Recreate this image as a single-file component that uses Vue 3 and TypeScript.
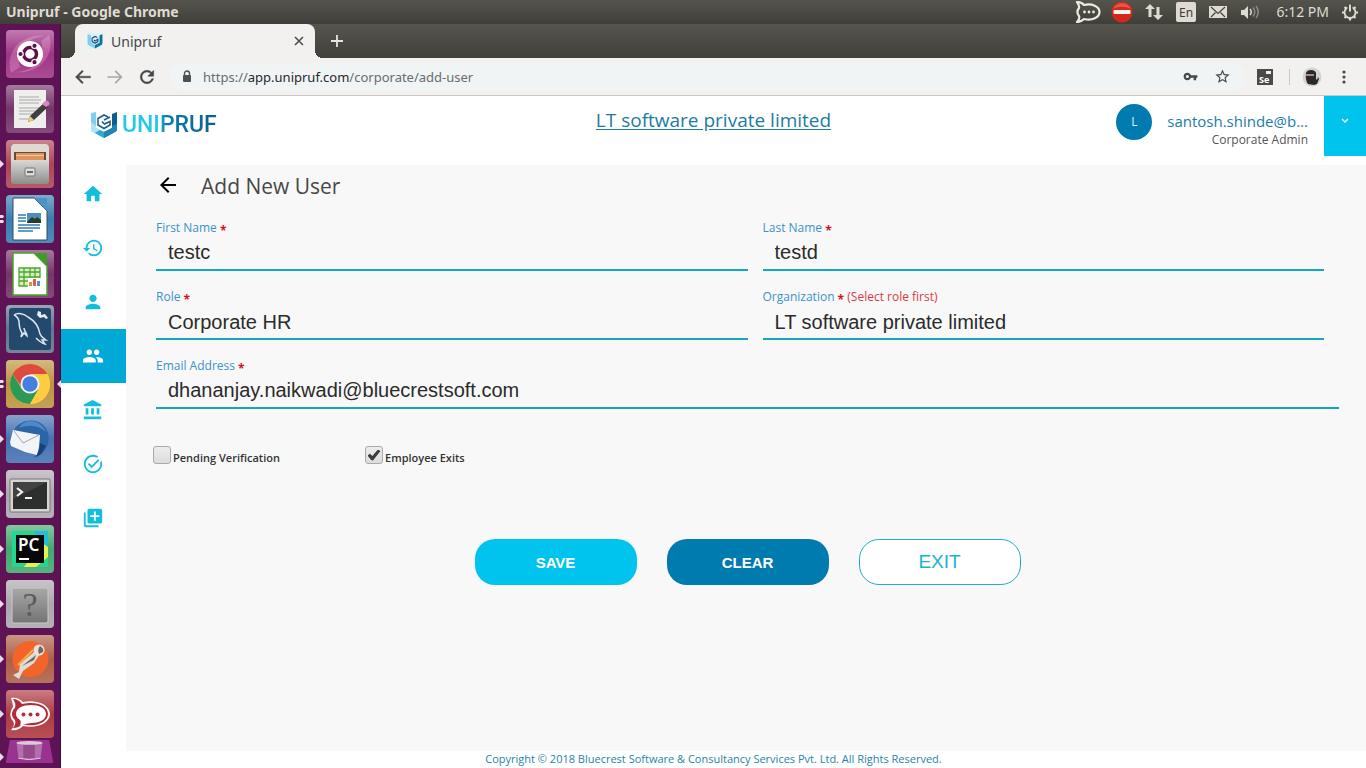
<script setup lang="ts">
import { ref } from 'vue'

interface NavItem {
  label: string
  path: string
  active?: boolean
}

interface Person {
  firstName: string
  lastName: string
  role: string
  organization: string
  email: string
}

const form = ref<Person>({
  firstName: 'testc',
  lastName: 'testd',
  role: 'Corporate HR',
  organization: 'LT software private limited',
  email: 'dhananjay.naikwadi@bluecrestsoft.com',
})
const pending = ref(false)
const exits = ref(true)

function clearForm(): void {
  form.value = { firstName: '', lastName: '', role: '', organization: '', email: '' }
  pending.value = false
  exits.value = false
}

const nav: NavItem[] = [
  { label: 'Home', path: 'M10 20v-6h4v6h5v-8h3L12 3 2 12h3v8z' },
  {
    label: 'History',
    path: 'M13 3c-4.97 0-9 4.03-9 9H1l3.89 3.89.07.14L9 12H6c0-3.87 3.13-7 7-7s7 3.13 7 7-3.13 7-7 7c-1.93 0-3.68-.79-4.94-2.06l-1.42 1.42C8.27 19.99 10.51 21 13 21c4.97 0 9-4.03 9-9s-4.03-9-9-9zm-1 5v5l4.28 2.54.72-1.21-3.5-2.08V8H12z',
  },
  {
    label: 'Profile',
    path: 'M12 12c2.21 0 4-1.79 4-4s-1.79-4-4-4-4 1.79-4 4 1.79 4 4 4zm0 2c-2.67 0-8 1.34-8 4v2h16v-2c0-2.66-5.33-4-8-4z',
  },
  {
    label: 'Users',
    active: true,
    path: 'M16 11c1.66 0 2.99-1.34 2.99-3S17.66 5 16 5c-1.66 0-3 1.34-3 3s1.34 3 3 3zm-8 0c1.66 0 2.99-1.34 2.99-3S9.66 5 8 5C6.34 5 5 6.34 5 8s1.34 3 3 3zm0 2c-2.33 0-7 1.17-7 3.5V19h14v-2.5c0-2.33-4.67-3.5-7-3.5zm8 0c-.29 0-.62.02-.97.05 1.16.84 1.97 1.97 1.97 3.45V19h6v-2.5c0-2.33-4.67-3.5-7-3.5z',
  },
  {
    label: 'Organizations',
    path: 'M4 10v7h3v-7H4zm6 0v7h3v-7h-3zM2 22h19v-3H2v3zm14-12v7h3v-7h-3zm-4.5-9L2 6v2h19V6l-9.5-5z',
  },
  {
    label: 'Verification',
    path: 'M10.6 16.6l-4.24-4.24 1.41-1.41 2.83 2.83 6.9-6.9 1.41 1.41zM19.79 10.22c.13.57.21 1.17.21 1.78 0 4.42-3.58 8-8 8s-8-3.58-8-8 3.58-8 8-8c1.58 0 3.04.46 4.28 1.25l1.44-1.44C16.1 2.67 14.13 2 12 2 6.48 2 2 6.48 2 12s4.48 10 10 10 10-4.48 10-10c0-1.19-.22-2.33-.6-3.39z',
  },
  {
    label: 'Add request',
    path: 'M4 6H2v14c0 1.1.9 2 2 2h14v-2H4V6zm16-4H8c-1.1 0-2 .9-2 2v12c0 1.1.9 2 2 2h12c1.1 0 2-.9 2-2V4c0-1.1-.9-2-2-2zm-1 9h-4v4h-2v-4H9V9h4V5h2v4h4v2z',
  },
]
</script>

<template>
  <div class="desktop">
    <header class="panel">
      <span class="panel-title">Unipruf - Google Chrome</span>
      <div class="indicators">
        <svg width="26" height="22" viewBox="0 0 26 22">
          <path d="M2 1c3 0 5.500 1 7 3 8-2 15.500 1.500 15.500 7S17 20 9 18c-2 2-4 3-7 3 2-2 2.800-4 2-6-2-2.500-2-5.500 0-8 .5-2-.5-4-2-6z" fill="none" stroke="#eeeae2" stroke-width="2.200" stroke-linejoin="round" />
          <g fill="#eeeae2"><circle cx="9.500" cy="11" r="1.400" /><circle cx="14" cy="11" r="1.400" /><circle cx="18.500" cy="11" r="1.400" /></g>
        </svg>
        <svg width="22" height="22" viewBox="0 0 22 22">
          <circle cx="11" cy="11" r="10.500" fill="#d2291f" />
          <path d="M2 8a10 10 0 0 1 18 0c-5-3-13-3-18 0z" fill="#ee7b68" opacity=".6" />
          <rect x="2.500" y="9" width="17" height="4" rx="1" fill="#f6f2ee" />
        </svg>
        <svg width="22" height="22" viewBox="0 0 22 22">
          <path d="M7 3l5 5H8.500v8h-3V8H2zM15 19l-5-5h3.500V6h3v8H20z" fill="#dfdbd2" />
        </svg>
        <svg width="22" height="22" viewBox="0 0 22 22">
          <rect x="1" y="1" width="20" height="20" rx="2" fill="#dfdbd2" />
          <text x="11" y="16" text-anchor="middle" font-size="12" fill="#3c3b37">En</text>
        </svg>
        <svg width="22" height="22" viewBox="0 0 22 22">
          <rect x="2" y="5" width="18" height="12" fill="#dfdbd2" />
          <path d="M4 6l7 6.500L18 6M4 16l4.500-4.500M18 16l-4.500-4.500" fill="none" stroke="#45443e" stroke-width="1.200" />
        </svg>
        <svg width="22" height="22" viewBox="0 0 22 22">
          <path d="M2 9h3l4-4v13l-4-4H2z" fill="#dfdbd2" />
          <path d="M11 8q2.500 3 0 6" fill="none" stroke="#dfdbd2" stroke-width="1.500" />
          <path d="M14 6.500q3.500 4.500 0 9M17 5q4.500 6 0 12" fill="none" stroke="#8b8982" stroke-width="1.500" />
        </svg>
        <time>6:12 PM</time>
        <svg width="18" height="22" viewBox="0 0 18 22">
          <circle cx="9" cy="11.500" r="5.500" fill="none" stroke="#dfdbd2" stroke-width="1.800" />
          <g stroke="#dfdbd2" stroke-width="2.200">
            <path d="M1 11.500h3M14 11.500h3M9 16.500v3M3.500 6l2 2M14.500 6l-2 2M3.500 17l2-2M14.500 17l-2-2" />
          </g>
          <path d="M9 3v7" stroke="#45443e" stroke-width="5" />
          <path d="M9 3.500v7" stroke="#dfdbd2" stroke-width="2" />
        </svg>
      </div>
    </header>

    <aside class="launcher">
      <svg class="defs" width="0" height="0" aria-hidden="true">
        <defs>
          <linearGradient id="gloss" x1="0" y1="0" x2="0" y2="1">
            <stop offset="0" stop-color="#fff" stop-opacity=".38" />
            <stop offset=".5" stop-color="#fff" stop-opacity=".05" />
            <stop offset="1" stop-color="#fff" stop-opacity=".16" />
          </linearGradient>
          <linearGradient id="steel" x1="0" y1="0" x2="0" y2="1">
            <stop offset="0" stop-color="#d8d8d6" />
            <stop offset="1" stop-color="#8d8d8c" />
          </linearGradient>
          <linearGradient id="slate" x1="0" y1="0" x2="0" y2="1">
            <stop offset="0" stop-color="#a8a8a8" />
            <stop offset="1" stop-color="#747474" />
          </linearGradient>
        </defs>
      </svg>

      <button class="tile" aria-label="Search your computer">
        <svg viewBox="0 0 48 48">
          <rect width="48" height="48" rx="4" fill="#9a2a80" />
          <path d="M5 43C-2 20 18 2 42 6 22 6 9 20 14 37M43 5c7 22-12 40-36 37 20 0 34-13 28-31" fill="#d681b8" opacity=".45" />
          <rect width="48" height="48" rx="4" fill="url(#gloss)" />
          <circle cx="24" cy="24" r="13" fill="#fff" />
          <circle cx="24" cy="24" r="6.500" fill="none" stroke="#5e1049" stroke-width="3.500" />
          <g fill="#5e1049" stroke="#fff" stroke-width="1.200"><circle cx="14.500" cy="24" r="2.700" /><circle cx="28.500" cy="15.800" r="2.700" /><circle cx="28.500" cy="32.200" r="2.700" /></g>
        </svg>
      </button>
      <button class="tile" aria-label="Text Editor">
        <svg viewBox="0 0 48 48">
          <rect width="48" height="48" rx="4" fill="#6d2a63" />
          <rect width="48" height="48" rx="4" fill="url(#gloss)" />
          <path d="M8 5h32v38H8z" fill="#eeeeec" />
          <path d="M13 12h20M13 15h22M13 18h20M13 23h21M13 26h19M13 29h14M13 34h10" stroke="#a9a9a7" stroke-width="1.200" />
          <path d="M22 37l2-6 14-13 4 4-14 13z" fill="#3f3f3f" />
          <path d="M22 37l2-6 4 4z" fill="#e8cf75" />
          <path d="M36 19l3-3q3-1 4 1t0 3l-3 2z" fill="#d887c0" />
        </svg>
      </button>
      <button class="tile" aria-label="Files">
        <svg class="pip" width="5" height="8" viewBox="0 0 5 8"><path d="M0 0l4 4-4 4z" fill="#e6dde5" /></svg>
        <svg viewBox="0 0 48 48">
          <rect width="48" height="48" rx="4" fill="#a83b4d" />
          <rect width="48" height="48" rx="4" fill="url(#gloss)" />
          <path d="M8 4h32q2 0 3 3v15H5V7q1-3 3-3z" fill="#dddad4" />
          <path d="M8 12h32v8H8z" fill="#6a4a35" />
          <path d="M10 13h28v7H10z" fill="#e0935a" />
          <path d="M10 15h28v1H10z" fill="#f7c796" />
          <path d="M5 20h38v21q0 3-3 3H8q-3 0-3-3z" fill="url(#steel)" />
          <rect x="19" y="28" width="10" height="8" rx="1" fill="#ddd" stroke="#777" />
          <path d="M21 32h6" stroke="#666" stroke-width="2" />
        </svg>
      </button>
      <button class="tile" aria-label="LibreOffice Writer">
        <svg class="pip" width="5" height="8" viewBox="0 0 5 8"><path d="M0 0h3l1 1.500L3 3H0zM0 5h3l1 1.500L3 8H0z" fill="#e6dde5" /></svg>
        <svg viewBox="0 0 48 48">
          <rect width="48" height="48" rx="4" fill="#2f77ac" />
          <rect width="48" height="48" rx="4" fill="url(#gloss)" />
          <path d="M7 3h21l13 13v29H7z" fill="#fff" stroke="#2c4d66" />
          <path d="M28 3h13v13z" fill="#4c94c8" />
          <path d="M12 20h8M12 23h8M12 26h8M12 30h22M12 33h22M12 36h15" stroke="#2f7db4" stroke-width="1.500" />
          <path d="M21 18h14v10H21z" fill="#4990bf" />
          <path d="M21 27l5-5 3 2 2-2 4 3v3H21z" fill="#263c24" />
        </svg>
      </button>
      <button class="tile" aria-label="LibreOffice Calc">
        <svg viewBox="0 0 48 48">
          <rect width="48" height="48" rx="4" fill="#6d2a63" />
          <rect width="48" height="48" rx="4" fill="url(#gloss)" />
          <path d="M7 3h21l13 13v29H7z" fill="#fff" stroke="#48a52b" stroke-width="1.500" />
          <path d="M28 3h13v13z" fill="#3e9d25" />
          <path d="M13 18h21v18H13z" fill="#d9efc4" />
          <path d="M13 18h21v18H13zM13 22h21M13 27h21M13 31h21M18 18v18M24 18v18M29 18v18" fill="none" stroke="#4ca82d" stroke-width="1.300" />
          <path d="M22 28h14v9H22z" fill="#fff" />
          <path d="M23 32h3v4h-3z" fill="#e78b47" /><path d="M27 29h3v7h-3z" fill="#d9644c" /><path d="M31 31h3v5h-3z" fill="#5b91c8" />
        </svg>
      </button>
      <button class="tile" aria-label="MySQL Workbench">
        <svg viewBox="0 0 48 48">
          <rect width="48" height="48" rx="4" fill="#5d6d8a" />
          <rect width="48" height="48" rx="4" fill="url(#gloss)" />
          <rect x="3" y="3" width="42" height="42" rx="3" fill="#23496d" />
          <path d="M8 10c4-3 10-1 14 2 7 4 11 11 12 17 1 3 3 4 6 6l-4 0 3 4c-4-1-7-4-9-6M8 10c3 1 4 3 5 6 0 5 1 9 3 12l-1 4 3-4 3 3c0-3-3-5-3-8" fill="none" stroke="#d9e5ee" stroke-width="1.500" />
          <path d="M32 6l3 1 0 3 4-1 3 4-2 1-2-2-4 1-3-3z" fill="#e9eef2" />
        </svg>
      </button>
      <button class="tile" aria-label="Google Chrome">
        <svg class="pip" width="5" height="8" viewBox="0 0 5 8"><path d="M0 0h3l1 1.500L3 3H0zM0 5h3l1 1.500L3 8H0z" fill="#e6dde5" /></svg>
        <svg class="pip-right" width="5" height="8" viewBox="0 0 5 8"><path d="M5 0L1 4l4 4z" fill="#e6dde5" /></svg>
        <svg viewBox="0 0 48 48">
          <rect width="48" height="48" rx="4" fill="#b88f35" />
          <rect width="48" height="48" rx="4" fill="url(#gloss)" />
          <circle cx="24" cy="24" r="20" fill="#ffcd45" />
          <path d="M6.700 14A20 20 0 0 1 41.300 14L24 15l-8.500 12z" fill="#dd4b3e" />
          <path d="M6.700 14A20 20 0 0 0 24 44l8.500-15L24 33l-8-4z" fill="#2c9a56" />
          <path d="M24 14h17.300A20 20 0 0 1 24 44l9-15z" fill="#fccc42" />
          <circle cx="24" cy="24" r="9.500" fill="#f5f5f5" /><circle cx="24" cy="24" r="7.700" fill="#467fe0" />
        </svg>
      </button>
      <button class="tile" aria-label="Thunderbird Mail">
        <svg class="pip" width="5" height="8" viewBox="0 0 5 8"><path d="M0 0l4 4-4 4z" fill="#e6dde5" /></svg>
        <svg viewBox="0 0 48 48">
          <rect width="48" height="48" rx="4" fill="#3b6cae" />
          <rect width="48" height="48" rx="4" fill="url(#gloss)" />
          <path d="M8 15C16 2 37 2 42 18c3 11-4 23-15 25 8-7 8-13 4-20z" fill="#2c64a8" />
          <path d="M13 13C20 1 36 6 40 17c-8-7-17-8-27-4z" fill="#4a8bc9" />
          <path d="M4 27l3-12 27 5-1 12-2 8-12-3-14-6z" fill="#f3f4f6" />
          <path d="M8 16l9 12 16-8" fill="none" stroke="#9da8b5" />
          <path d="M34 28l6 3-5 8-5 3 3-7z" fill="#193f7d" />
        </svg>
      </button>
      <button class="tile" aria-label="Terminal">
        <svg class="pip" width="5" height="8" viewBox="0 0 5 8"><path d="M0 0l4 4-4 4z" fill="#e6dde5" /></svg>
        <svg viewBox="0 0 48 48">
          <rect width="48" height="48" rx="4" fill="#aaa2ad" />
          <rect width="48" height="48" rx="4" fill="url(#gloss)" />
          <rect x="4" y="9" width="40" height="33" rx="1" fill="#d5d5d2" stroke="#777" />
          <path d="M7 12h34v27H7z" fill="#2d2f2e" /><path d="M7 12h34L7 29z" fill="#4e504f" opacity=".6" />
          <path d="M11 18l5 4-5 4M19 28h7" fill="none" stroke="#f2f2f2" stroke-width="2.200" />
        </svg>
      </button>
      <button class="tile" aria-label="PyCharm">
        <svg class="pip" width="5" height="8" viewBox="0 0 5 8"><path d="M0 0l4 4-4 4z" fill="#e6dde5" /></svg>
        <svg viewBox="0 0 48 48">
          <rect width="48" height="48" rx="4" fill="#39a468" />
          <rect width="48" height="48" rx="4" fill="url(#gloss)" />
          <path d="M6 6h36v36H6z" fill="#22d88f" /><path d="M28 6h14v20l-8-6z" fill="#20bfd8" /><path d="M42 22v10L30 42H18l18-24z" fill="#e9ef4f" />
          <path d="M10 10h28v28H10z" fill="#080808" /><path d="M13 34h10" stroke="#fff" stroke-width="2" />
          <text x="12" y="26" font-size="17" font-weight="600" fill="#fff">PC</text>
        </svg>
      </button>
      <button class="tile" aria-label="Unknown application">
        <svg class="pip" width="5" height="8" viewBox="0 0 5 8"><path d="M0 0l4 4-4 4z" fill="#e6dde5" /></svg>
        <svg viewBox="0 0 48 48">
          <rect width="48" height="48" rx="4" fill="#a7a2aa" />
          <rect width="48" height="48" rx="4" fill="url(#gloss)" />
          <rect x="6" y="8" width="36" height="35" rx="2" fill="url(#slate)" stroke="#c9c9c9" />
          <text class="serif" x="24" y="36" text-anchor="middle" font-size="34" fill="#5c5c5c">?</text>
        </svg>
      </button>
      <button class="tile" aria-label="Postman">
        <svg class="pip" width="5" height="8" viewBox="0 0 5 8"><path d="M0 0l4 4-4 4z" fill="#e6dde5" /></svg>
        <svg viewBox="0 0 48 48">
          <rect width="48" height="48" rx="4" fill="#a9573e" />
          <rect width="48" height="48" rx="4" fill="url(#gloss)" />
          <circle cx="24.500" cy="24" r="18" fill="#f3642b" />
          <path d="M28 17L14 29l-1 8-6 3 6 4 4-8 11-8 6-9z" fill="#dddcd6" />
          <path d="M30 20L16 31l12-6z" fill="#6b6862" />
          <path d="M27 15L12 30" stroke="#f3b23c" stroke-width="2" />
          <circle cx="33" cy="15" r="5.500" fill="#e5e4df" /><path d="M34 11q4 2 3 6l-4 2q-2-4 1-8z" fill="#6b6862" />
        </svg>
      </button>
      <button class="tile" aria-label="Rocket.Chat">
        <svg class="pip" width="5" height="8" viewBox="0 0 5 8"><path d="M0 0l4 4-4 4z" fill="#e6dde5" /></svg>
        <svg viewBox="0 0 48 48">
          <rect width="48" height="48" rx="4" fill="#aa2e38" />
          <rect width="48" height="48" rx="4" fill="url(#gloss)" />
          <path d="M5 8c5-1 9 1 12 4 14-3 27 3 27 12s-13 15-27 12c-3 3-7 5-12 4 4-4 3-7 2-9-4-4-3-10 0-14 0-3-1-6-2-9z" fill="#fff" />
          <path d="M7 9c4 0 7 2 9 5 15-3 26 2 26 10s-12 14-26 10c-3 3-5 4-9 4 2-3 3-5 2-8-4-3-4-9 0-12 1-3 0-6-2-9z" fill="#b52b36" />
          <path d="M10 24c0-6 7-9 15-9s15 3 15 9-7 9-15 9l-11 2c1-2 1-3 0-5-3-2-4-4-4-6z" fill="#fff" />
          <g fill="#b52b36"><circle cx="17.500" cy="24.500" r="2" /><circle cx="24.500" cy="24.500" r="2" /><circle cx="31.500" cy="24.500" r="2" /></g>
        </svg>
      </button>
      <button class="tile folded" aria-label="Trash">
        <svg class="pip" width="5" height="8" viewBox="0 0 5 8"><path d="M0 0l4 4-4 4z" fill="#e6dde5" /></svg>
        <svg viewBox="0 0 50 24">
          <path d="M4 0h41l4 22q1 2-1 2H1q-2 0-1-2z" fill="#9a3290" />
          <path d="M11 3h27l-2 16q-11 3-23 0z" fill="#b680b0" opacity=".8" />
          <path d="M18 4h12v15H18z" fill="#853079" opacity=".6" />
          <ellipse cx="24.500" cy="3" rx="13.500" ry="2" fill="#dcc9da" />
          <path d="M13 19q11 3 23 0" fill="none" stroke="#e0cddd" />
        </svg>
      </button>
    </aside>

    <div class="browser">
      <div class="tabs">
        <div class="tab">
          <svg width="16" height="16" viewBox="0 0 28 28">
            <rect width="28" height="28" fill="#dff1f8" />
            <path d="M1 2l6 2v13l7 4v6L3 21q-2-1-2-4z" fill="#7fcfec" />
            <path d="M27 2l-5 2v13l-8 4v6l11-6q2-1 2-4z" fill="#0e6f9e" />
            <path d="M18 8l-4-2-5 3v6l5 3 5-3v-4l-5 3-2-2" fill="none" stroke="#17527c" stroke-width="2" />
          </svg>
          <span class="tab-name">Unipruf</span>
          <button class="plain" aria-label="Close tab">
            <svg width="10" height="10" viewBox="0 0 10 10"><path d="M1 1l8 8M9 1L1 9" stroke="#4a4d50" stroke-width="1.600" /></svg>
          </button>
        </div>
        <button class="plain new-tab" aria-label="New tab">
          <svg width="12" height="12" viewBox="0 0 12 12"><path d="M6 0v12M0 6h12" stroke="#e7e6e2" stroke-width="1.800" /></svg>
        </button>
      </div>

      <div class="toolbar">
        <div class="nav-buttons">
          <button class="plain" aria-label="Back"><svg width="20" height="20" viewBox="0 0 24 24"><path d="M21 11H6.800l5.600-5.600L11 4l-8 8 8 8 1.400-1.400L6.800 13H21z" fill="#45484b" stroke="#45484b" stroke-width=".5" /></svg></button>
          <button class="plain" aria-label="Forward"><svg width="20" height="20" viewBox="0 0 24 24"><path d="M3 11h14.200l-5.600-5.600L13 4l8 8-8 8-1.400-1.400 5.600-5.600H3z" fill="#a6a7a7" /></svg></button>
          <button class="plain" aria-label="Reload"><svg width="20" height="20" viewBox="0 0 24 24"><path d="M17.650 6.350C16.200 4.900 14.210 4 12 4c-4.420 0-7.990 3.580-7.990 8s3.570 8 7.990 8c3.730 0 6.840-2.550 7.730-6h-2.080c-.82 2.330-3.040 4-5.650 4-3.310 0-6-2.690-6-6s2.690-6 6-6c1.660 0 3.140.69 4.220 1.780L13 11h7V4l-2.350 2.350z" fill="#45484b" stroke="#45484b" stroke-width=".6" /></svg></button>
        </div>
        <div class="omnibox">
          <svg width="10" height="13" viewBox="0 0 10 13"><path d="M2.500 6V3.500a2.500 2.500 0 0 1 5 0V6" fill="none" stroke="#4d5154" stroke-width="1.400" /><rect x="1" y="5" width="8" height="7" rx="1" fill="#4d5154" /></svg>
          <div class="url" role="textbox" aria-label="Address"><span>https://</span><span class="host">app.unipruf.com</span><span>/corporate/add-user</span></div>
          <button class="plain" aria-label="Saved passwords"><svg width="15" height="15" viewBox="0 0 24 24"><path d="M12.650 10C11.830 7.670 9.610 6 7 6c-3.310 0-6 2.690-6 6s2.690 6 6 6c2.610 0 4.830-1.670 5.650-4H17v4h4v-4h2v-4H12.650zM7 14.500a2.500 2.500 0 1 1 0-5 2.500 2.500 0 0 1 0 5z" fill="#45484b" /></svg></button>
          <button class="plain" aria-label="Bookmark this page"><svg width="17" height="17" viewBox="0 0 24 24"><path d="M22 9.240l-7.190-.62L12 2 9.190 8.630 2 9.240l5.460 4.730L5.820 21 12 17.270 18.180 21l-1.630-7.030L22 9.240zM12 15.400l-3.760 2.270 1-4.280-3.320-2.880 4.380-.38L12 6.100l1.710 4.040 4.380.38-3.320 2.880 1 4.280L12 15.400z" fill="#45484b" /></svg></button>
        </div>
        <button class="plain" aria-label="Selenium IDE">
          <svg width="16" height="16" viewBox="0 0 16 16"><rect width="16" height="16" fill="#4a4a4a" /><rect x="9" y="2" width="5" height="3" fill="#eee" /><text x="2" y="14" font-size="9" font-weight="700" fill="#fff">Se</text></svg>
        </button>
        <i class="divider"></i>
        <button class="plain" aria-label="Profile">
          <svg width="20" height="20" viewBox="0 0 20 20"><circle cx="10" cy="10" r="9.500" fill="#d3d3d2" /><path d="M4 6q1-3 5-3t5 3v6l1 1 1-3 1 2-2 5-3 1-6-1q-3-4-2-11z" fill="#2b2829" /><path d="M4 7h8v2H4z" fill="#ad8a80" /></svg>
        </button>
        <button class="plain menu" aria-label="Menu">
          <svg width="4" height="14" viewBox="0 0 4 14"><g fill="#45484b"><circle cx="2" cy="2" r="1.600" /><circle cx="2" cy="7" r="1.600" /><circle cx="2" cy="12" r="1.600" /></g></svg>
        </button>
      </div>

      <div class="app">
        <header class="app-header">
          <a class="logo" href="#" aria-label="Unipruf">
            <svg width="28" height="26" viewBox="0 0 28 26">
              <path d="M1 1l5-1v16l8 4v6L3 20q-2-1-2-4z" fill="#7fd0ef" />
              <path d="M1 10l5 4v2l8 4v6L3 20q-2-1-2-4z" fill="#aee2f4" />
              <path d="M14 20l-4-2-5 3 9 5z" fill="#2fa8d4" />
              <path d="M27 0l-5 2v14l-8 4v6l11-6q2-1 2-4z" fill="#0d5c8d" />
              <path d="M22 14l5-2v4q0 3-2 4l-11 6v-6l8-4z" fill="#1f86b4" />
              <path d="M18 5l-4-2-6 3.500v6.500l6 3.500 6-3.500V9.500L14.500 12 12 9.500M14 8l6-3" fill="none" stroke="#1c5f88" stroke-width="1.600" />
            </svg>
            <span class="wordmark">UNIPRUF</span>
          </a>
          <a class="company" href="#">LT software private limited</a>
          <div class="account">
            <span class="avatar">L</span>
            <div class="who">
              <span class="mail">santosh.shinde@b...</span>
              <span class="role">Corporate Admin</span>
            </div>
            <button class="expand" aria-label="Account menu">
              <svg width="8" height="6" viewBox="0 0 8 6"><path d="M1 1l3 3 3-3" fill="none" stroke="#fff" stroke-width="1.300" /></svg>
            </button>
          </div>
        </header>

        <nav class="side">
          <a v-for="item in nav" :key="item.label" href="#" :class="{ active: item.active }" :aria-label="item.label">
            <svg width="24" height="24" viewBox="0 0 24 24"><path :d="item.path" fill="currentColor" /></svg>
          </a>
        </nav>

        <main class="content">
          <div class="heading">
            <button class="plain" aria-label="Go back"><svg width="24" height="24" viewBox="0 0 24 24"><path d="M20 11H7.830l5.590-5.590L12 4l-8 8 8 8 1.410-1.410L7.830 13H20v-2z" fill="#000" /></svg></button>
            <h1>Add New User</h1>
          </div>

          <form @submit.prevent>
            <div class="fields">
              <div class="field">
                <label for="first">First Name <b>*</b></label>
                <input id="first" v-model="form.firstName" type="text" />
              </div>
              <div class="field inset">
                <label for="last">Last Name <b>*</b></label>
                <input id="last" v-model="form.lastName" type="text" />
              </div>
              <div class="field">
                <label for="role">Role <b>*</b></label>
                <select id="role" v-model="form.role"><option>Corporate HR</option></select>
              </div>
              <div class="field inset">
                <label for="org">Organization <b>*</b> <em>(Select role first)</em></label>
                <select id="org" v-model="form.organization"><option>LT software private limited</option></select>
              </div>
              <div class="field wide">
                <label for="email">Email Address <b>*</b></label>
                <input id="email" v-model="form.email" type="email" />
              </div>
            </div>

            <div class="checks">
              <label><input v-model="pending" type="checkbox" /><span>Pending Verification</span></label>
              <label><input v-model="exits" type="checkbox" /><span>Employee Exits</span></label>
            </div>

            <div class="actions">
              <button class="save" type="submit">SAVE</button>
              <button class="clear" type="button" @click="clearForm">CLEAR</button>
              <button class="exit" type="button">EXIT</button>
            </div>
          </form>
        </main>

        <footer>Copyright © 2018 Bluecrest Software &amp; Consultancy Services Pvt. Ltd. All Rights Reserved.</footer>
      </div>
    </div>
  </div>
</template>

<style>
body {
  margin: 0;
}
</style>

<style scoped>
* {
  box-sizing: border-box;
}

.desktop {
  display: grid;
  grid-template: 24px minmax(0, 1fr) / 61px minmax(0, 1fr);
  height: 100vh;
  overflow: hidden;
  font-family: "Noto Sans", "Open Sans", sans-serif;
}

svg {
  display: block;
  flex: none;
}

button,
input,
select {
  font: inherit;
  margin: 0;
}

.plain {
  display: flex;
  padding: 0;
  border: 0;
  background: none;
}

/* Desktop panel */
.panel {
  grid-column: 1 / -1;
  display: flex;
  align-items: center;
  justify-content: space-between;
  padding: 0 7px 0 6px;
  background: linear-gradient(#55544c, #3f3e39);
  color: #dfdbd2;
  line-height: 20px;
}

.panel-title {
  font-size: 14px;
  font-weight: 700;
}

.indicators {
  display: flex;
  align-items: center;
  gap: 10px;
}

.indicators time {
  padding: 0 2px 0 5px;
  font-size: 14px;
}

/* Launcher */
.launcher {
  display: flex;
  flex-direction: column;
  gap: 7px;
  padding: 6px 7px 4px 6px;
  background: #5e1355;
  border-right: 1px solid #35103a;
}

.defs {
  position: absolute;
}

.tile {
  position: relative;
  flex: none;
  width: 48px;
  height: 48px;
  padding: 0;
  border: 0;
  background: none;
}

.tile.folded {
  height: 24px;
  margin-top: -5px;
}

.pip,
.pip-right {
  position: absolute;
  top: 20px;
  left: -6px;
}

.folded .pip {
  top: 13px;
}

.pip-right {
  left: 50px;
}

.serif {
  font-family: "Liberation Serif", serif;
}

/* Browser chrome */
.browser {
  display: grid;
  grid-template-rows: 34px 38px minmax(0, 1fr);
}

.tabs {
  display: flex;
  padding-left: 14px;
  background: linear-gradient(#56554d, #403f3a);
}

.tab {
  position: relative;
  display: flex;
  align-items: center;
  width: 240px;
  padding: 0 11px 0 12px;
  border-radius: 8px 8px 0 0;
  background: #f2f1f0;
}

.tab::before,
.tab::after {
  content: "";
  position: absolute;
  bottom: 0;
  left: -8px;
  width: 8px;
  height: 8px;
  background: radial-gradient(circle at 0 0, transparent 8px, #f2f1f0 8px);
}

.tab::after {
  left: 100%;
  background: radial-gradient(circle at 100% 0, transparent 8px, #f2f1f0 8px);
}

.tab-name {
  flex: 1;
  padding-left: 8px;
  color: #45484b;
  font-size: 14px;
}

.new-tab {
  align-items: center;
  padding-left: 16px;
}

.toolbar {
  display: flex;
  align-items: center;
  gap: 12px;
  padding: 0 20px 0 12px;
  background: #f2f1f0;
  border-bottom: 1px solid #c9c8c7;
}

.nav-buttons {
  display: flex;
  gap: 12px;
}

.omnibox {
  flex: 1;
  display: flex;
  align-items: center;
  gap: 16px;
  height: 28px;
  margin-left: 1px;
  padding: 0 14px 0 12px;
  border-radius: 14px;
  background: #f0f4f5;
  color: #686c6f;
  font-size: 13px;
}

.url {
  flex: 1;
  margin-left: -5px;
}

.host {
  color: #25282b;
}

.divider {
  width: 1px;
  height: 16px;
  margin-left: 4px;
  background: #c9c9c8;
}

.menu {
  padding-left: 8px;
}

/* Application */
.app {
  display: grid;
  grid-template: 69px minmax(0, 1fr) 17px / 65px minmax(0, 1fr);
  background: #fff;
  font-family: "Open Sans", "Noto Sans", sans-serif;
}

.app-header {
  grid-column: 1 / -1;
  display: grid;
  grid-template-columns: 1fr auto 1fr;
  align-items: start;
}

.logo {
  display: flex;
  align-items: center;
  gap: 4px;
  padding: 15px 0 0 29px;
  text-decoration: none;
}

.wordmark {
  background: linear-gradient(90deg, #22c7ea 0 38%, #0b7cae 46%, #0d5f91);
  background-clip: text;
  color: transparent;
  font-family: Roboto, sans-serif;
  font-size: 23px;
  font-weight: 500;
  line-height: 28px;
}

.company {
  padding-top: 12px;
  color: #1a7d9f;
  font-size: 19px;
  line-height: 24px;
  text-underline-offset: 2px;
}

.account {
  display: flex;
  justify-content: flex-end;
}

.avatar {
  width: 36px;
  height: 36px;
  margin: 8px 15px 0 0;
  border-radius: 50%;
  background: #007bb0;
  color: #d9f2fc;
  font-size: 12px;
  line-height: 36px;
  text-align: center;
}

.who {
  display: flex;
  flex-direction: column;
  padding: 15px 16px 0 0;
  text-align: right;
}

.mail {
  color: #1c7cab;
  font-size: 15px;
  line-height: 20px;
}

.role {
  color: #555;
  font-size: 12px;
  line-height: 17px;
}

.expand {
  display: flex;
  justify-content: center;
  width: 42px;
  height: 60px;
  padding: 22px 0 0;
  border: 0;
  background: #00c4ee;
}

.side {
  padding-top: 2px;
}

.side a {
  display: flex;
  align-items: center;
  justify-content: center;
  height: 54px;
  padding-right: 1px;
  color: #12bedd;
}

.side a.active {
  background: #00a9d6;
  color: #fff;
}

.side svg {
  width: 22px;
  height: 22px;
}

.content {
  padding: 8px 27px 0 30px;
  background: #f8f8f8;
}

.heading {
  display: flex;
  align-items: flex-start;
  gap: 21px;
}

h1 {
  margin: 0;
  color: #484848;
  font-size: 21px;
  font-weight: 400;
  line-height: 27px;
}

.fields {
  display: grid;
  grid-template-columns: 1fr 1fr;
  row-gap: 18px;
  padding-top: 20px;
}

.field {
  display: flex;
  flex-direction: column;
}

.field.inset {
  padding: 0 15px;
}

.field.wide {
  grid-column: 1 / -1;
}

.field label {
  color: #3a93c8;
  font-size: 12px;
  line-height: 16px;
}

.field b {
  color: #d8101c;
  line-height: 10px;
  vertical-align: -3px;
}

.field em {
  color: #d63b43;
  font-style: normal;
}

.field input,
.field select {
  width: 100%;
  height: 35px;
  padding: 0 12px;
  border: 0;
  border-bottom: 2px solid #13a6bf;
  border-radius: 0;
  background: none;
  color: #2b2b2b;
  font-family: "Liberation Sans", Arial, sans-serif;
  font-size: 20px;
  appearance: none;
}

.checks {
  display: grid;
  grid-template-columns: 212px 212px;
  margin-left: -3px;
  padding-top: 37px;
}

.checks label {
  display: flex;
  align-items: flex-start;
  gap: 2px;
  color: #333;
  font-size: 11px;
  font-weight: 600;
  line-height: 24px;
}

.checks input {
  display: grid;
  place-items: center;
  width: 18px;
  height: 18px;
  border: 1px solid #aaa;
  border-radius: 3px;
  background: linear-gradient(#ededed, #dcdcdc);
  appearance: none;
}

.checks input:checked::after {
  content: "";
  width: 13px;
  height: 11px;
  background: #3c3c3c;
  clip-path: polygon(0 55%, 18% 38%, 38% 60%, 80% 0, 100% 14%, 42% 100%, 28% 95%);
}

.actions {
  display: flex;
  justify-content: center;
  gap: 30px;
  padding-top: 69px;
}

.actions button {
  width: 162px;
  height: 46px;
  border: 1px solid transparent;
  border-radius: 20px;
  color: #fff;
  font-family: "Liberation Sans", Arial, sans-serif;
  font-size: 15px;
  font-weight: 700;
}

.actions .save {
  background: #00c4ee;
}

.actions .clear {
  background: #007bb0;
}

.actions .exit {
  border-color: #20adc9;
  background: #fff;
  color: #18b4d3;
  font-size: 19px;
  font-weight: 400;
}

footer {
  grid-column: 1 / -1;
  color: #2583b0;
  font-size: 11px;
  line-height: 16px;
  text-align: center;
}
</style>
